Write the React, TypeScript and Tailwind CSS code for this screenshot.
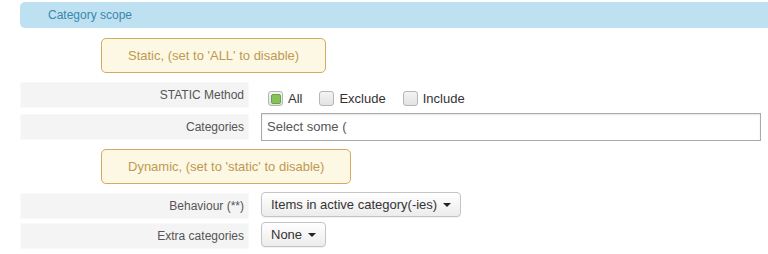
import { useState } from 'react';

const font = { fontFamily: '"Liberation Sans", Arial, sans-serif' };

const Label = ({ text }: { text: string }) => (
  <div className="w-[229px] h-[26px] shrink-0 bg-[#f4f4f4] border border-[#f9f9f9] flex items-center justify-end pr-[4px] text-[12px] text-[#555]">
    {text}
  </div>
);

const Notice = ({ text }: { text: string }) => (
  <div className="ml-[81px] inline-flex items-center h-[35px] px-[26px] bg-[#fcf8e3] border border-[#d2ab63] rounded-[5px] text-[13px] text-[#c09853]">
    {text}
  </div>
);

const Dropdown = ({ text }: { text: string }) => (
  <button className="h-[25px] flex items-center gap-[6px] px-[9px] border border-[#c4c4c4] rounded-[4px] bg-gradient-to-b from-white to-[#ececec] text-[13px] text-[#333] shadow-[0_1px_1px_rgba(0,0,0,0.06)]">
    <span>{text}</span>
    <span className="w-0 h-0 border-l-[4px] border-r-[4px] border-t-[4px] border-l-transparent border-r-transparent border-t-[#222]" />
  </button>
);

export default function App() {
  const [method, setMethod] = useState('All');
  const options = ['All', 'Exclude', 'Include'];

  return (
    <div className="w-[768px] h-[254px] bg-white overflow-hidden pt-[2px]" style={font}>
      <div className="ml-[20px] h-[26px] bg-[#bee1f2] rounded-l-[5px] flex items-center pl-[28px] text-[12px] text-[#3a87ad]">
        Category scope
      </div>

      <div className="mt-[10px] ml-[20px]">
        <Notice text="Static, (set to 'ALL' to disable)" />
      </div>

      <div className="mt-[9px] ml-[20px] flex items-start">
        <Label text="STATIC Method" />
        <div className="ml-[19px] pt-[8px] flex items-center text-[13px] text-[#333] leading-[17px]">
          {options.map(o => (
            <label key={o} className="flex items-center mr-[17px] cursor-pointer" onClick={() => setMethod(o)}>
              <span className="w-[15px] h-[15px] rounded-[3px] border border-[#b5b5b5] bg-gradient-to-b from-[#f4f4f4] to-[#e2e2e2] flex items-center justify-center">
                {method === o && (
                  <span className="w-[10px] h-[10px] rounded-[2px] bg-[#86c15a] border border-[#6aa543]" />
                )}
              </span>
              <span className="ml-[5px]">{o}</span>
            </label>
          ))}
        </div>
      </div>

      <div className="mt-[5px] ml-[20px] flex items-center">
        <Label text="Categories" />
        <div className="ml-[12px] w-[500px] h-[28px] border border-[#aaa] shadow-[inset_0_1px_2px_rgba(0,0,0,0.1)] flex items-center pl-[5px] text-[13px] text-[#555]">
          Select some (
        </div>
      </div>

      <div className="mt-[8px] ml-[20px]">
        <Notice text="Dynamic, (set to 'static' to disable)" />
      </div>

      <div className="mt-[8px] ml-[20px] flex items-start">
        <div className="mt-[1px]">
          <Label text="Behaviour (**)" />
        </div>
        <div className="ml-[12px]">
          <Dropdown text="Items in active category(-ies)" />
        </div>
      </div>

      <div className="mt-[3px] ml-[20px] flex items-start">
        <div className="mt-[1px]">
          <Label text="Extra categories" />
        </div>
        <div className="ml-[12px]">
          <Dropdown text="None" />
        </div>
      </div>
    </div>
  );
}
